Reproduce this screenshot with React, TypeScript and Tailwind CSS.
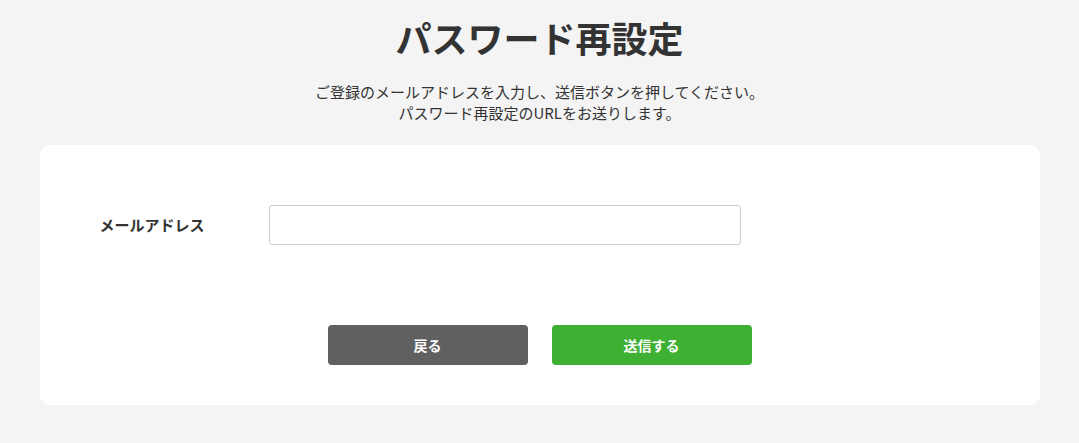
export default function App() {
  return (
    <div
      className="min-h-screen bg-[#f4f4f4] text-[#333333]"
      style={{ fontFamily: '"Noto Sans CJK JP", "Noto Sans", sans-serif' }}
    >
      <div className="mx-auto w-[1000px] pt-[10px]">
        <h1 className="text-center text-[36px] leading-[54px] font-bold">パスワード再設定</h1>
        <p className="mt-[17px] text-center text-[15px] leading-[21px]">
          ご登録のメールアドレスを入力し、送信ボタンを押してください。
          <br />
          パスワード再設定のURLをお送りします。
        </p>

        <div className="mt-[22px] rounded-[10px] bg-white px-[60px] pt-[60px] pb-[40px]">
          <div className="flex items-center">
            <label className="w-[169px] text-[15px] font-bold">メールアドレス</label>
            <input
              type="email"
              className="h-10 w-[472px] rounded-[3px] border border-[#cccccc] bg-white px-3 text-[15px] outline-none"
            />
          </div>

          <div className="mt-[80px] flex justify-center gap-6">
            <button className="h-10 w-[200px] rounded-[4px] bg-[#606060] text-[14px] font-bold text-white">
              戻る
            </button>
            <button className="h-10 w-[200px] rounded-[4px] bg-[#3eb134] text-[14px] font-bold text-white">
              送信する
            </button>
          </div>
        </div>
      </div>
    </div>
  )
}
